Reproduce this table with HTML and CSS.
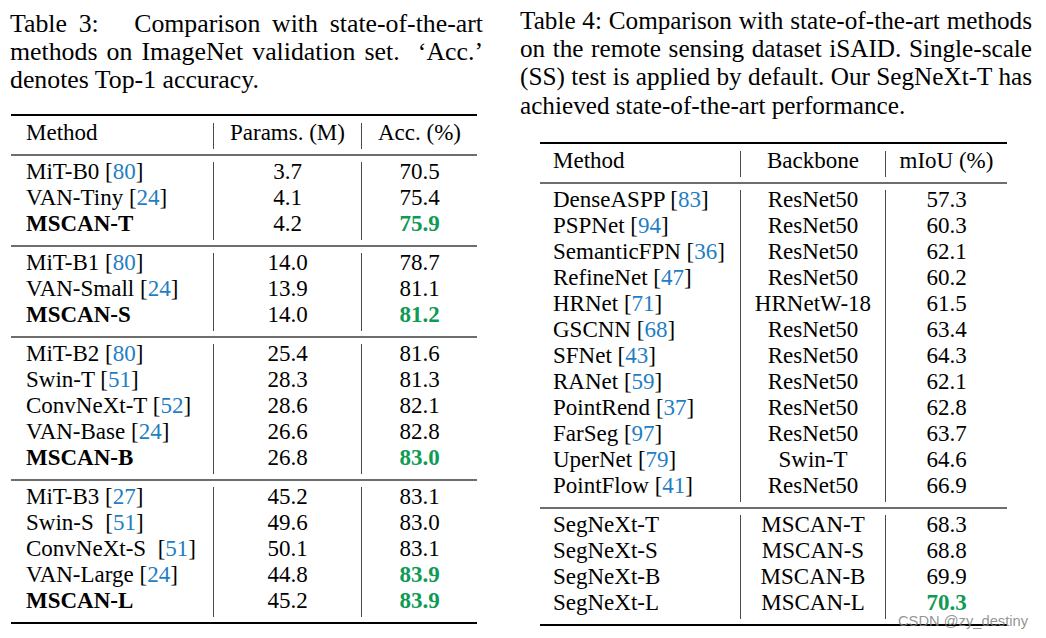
FILE: index.html
```html
<!DOCTYPE html>
<html>
<head>
<meta charset="utf-8">
<link rel="stylesheet" href="styles.css">
</head>
<body>
<div class="page">
  <section class="col col-left">
    <div class="caption cap3">
      <span class="jl">Table 3:&nbsp;&nbsp; Comparison with state-of-the-art</span>
      <span class="jl">methods on ImageNet validation set. &nbsp;‘Acc.’</span>
      <span class="ll">denotes Top-1 accuracy.</span>
    </div>
    <div class="tbl t3">
      <div class="grp head">
        <div class="c c1"><div class="ln">Method</div></div>
        <div class="c c2"><div class="ln">Params. (M)</div></div>
        <div class="c c3"><div class="ln">Acc. (%)</div></div>
      </div>
      <div class="grp">
        <div class="c c1"><div class="ln">MiT-B0 <span class="ref">[<span class="n">80</span>]</span></div><div class="ln">VAN-Tiny <span class="ref">[<span class="n">24</span>]</span></div><div class="ln b">MSCAN-T</div></div>
        <div class="c c2"><div class="ln">3.7</div><div class="ln">4.1</div><div class="ln">4.2</div></div>
        <div class="c c3"><div class="ln">70.5</div><div class="ln">75.4</div><div class="ln best">75.9</div></div>
      </div>
      <div class="grp">
        <div class="c c1"><div class="ln">MiT-B1 <span class="ref">[<span class="n">80</span>]</span></div><div class="ln">VAN-Small <span class="ref">[<span class="n">24</span>]</span></div><div class="ln b">MSCAN-S</div></div>
        <div class="c c2"><div class="ln">14.0</div><div class="ln">13.9</div><div class="ln">14.0</div></div>
        <div class="c c3"><div class="ln">78.7</div><div class="ln">81.1</div><div class="ln best">81.2</div></div>
      </div>
      <div class="grp">
        <div class="c c1"><div class="ln">MiT-B2 <span class="ref">[<span class="n">80</span>]</span></div><div class="ln">Swin-T <span class="ref">[<span class="n">51</span>]</span></div><div class="ln">ConvNeXt-T <span class="ref">[<span class="n">52</span>]</span></div><div class="ln">VAN-Base <span class="ref">[<span class="n">24</span>]</span></div><div class="ln b">MSCAN-B</div></div>
        <div class="c c2"><div class="ln">25.4</div><div class="ln">28.3</div><div class="ln">28.6</div><div class="ln">26.6</div><div class="ln">26.8</div></div>
        <div class="c c3"><div class="ln">81.6</div><div class="ln">81.3</div><div class="ln">82.1</div><div class="ln">82.8</div><div class="ln best">83.0</div></div>
      </div>
      <div class="grp">
        <div class="c c1"><div class="ln">MiT-B3 <span class="ref">[<span class="n">27</span>]</span></div><div class="ln">Swin-S&nbsp; <span class="ref">[<span class="n">51</span>]</span></div><div class="ln">ConvNeXt-S&nbsp; <span class="ref">[<span class="n">51</span>]</span></div><div class="ln">VAN-Large <span class="ref">[<span class="n">24</span>]</span></div><div class="ln b">MSCAN-L</div></div>
        <div class="c c2"><div class="ln">45.2</div><div class="ln">49.6</div><div class="ln">50.1</div><div class="ln">44.8</div><div class="ln">45.2</div></div>
        <div class="c c3"><div class="ln">83.1</div><div class="ln">83.0</div><div class="ln">83.1</div><div class="ln best">83.9</div><div class="ln best">83.9</div></div>
      </div>
    </div>
  </section>

  <section class="col col-right">
    <div class="caption cap4">
      <span class="jl">Table 4: Comparison with state-of-the-art methods</span>
      <span class="jl">on the remote sensing dataset iSAID. Single-scale</span>
      <span class="jl">(SS) test is applied by default. Our SegNeXt-T has</span>
      <span class="ll">achieved state-of-the-art performance.</span>
    </div>
    <div class="tbl t4">
      <div class="grp head">
        <div class="c c1"><div class="ln">Method</div></div>
        <div class="c c2"><div class="ln">Backbone</div></div>
        <div class="c c3"><div class="ln">mIoU (%)</div></div>
      </div>
      <div class="grp">
        <div class="c c1">
          <div class="ln">DenseASPP <span class="ref">[<span class="n">83</span>]</span></div>
          <div class="ln">PSPNet <span class="ref">[<span class="n">94</span>]</span></div>
          <div class="ln">SemanticFPN <span class="ref">[<span class="n">36</span>]</span></div>
          <div class="ln">RefineNet <span class="ref">[<span class="n">47</span>]</span></div>
          <div class="ln">HRNet <span class="ref">[<span class="n">71</span>]</span></div>
          <div class="ln">GSCNN <span class="ref">[<span class="n">68</span>]</span></div>
          <div class="ln">SFNet <span class="ref">[<span class="n">43</span>]</span></div>
          <div class="ln">RANet <span class="ref">[<span class="n">59</span>]</span></div>
          <div class="ln">PointRend <span class="ref">[<span class="n">37</span>]</span></div>
          <div class="ln">FarSeg <span class="ref">[<span class="n">97</span>]</span></div>
          <div class="ln">UperNet <span class="ref">[<span class="n">79</span>]</span></div>
          <div class="ln">PointFlow <span class="ref">[<span class="n">41</span>]</span></div>
        </div>
        <div class="c c2">
          <div class="ln">ResNet50</div><div class="ln">ResNet50</div><div class="ln">ResNet50</div><div class="ln">ResNet50</div>
          <div class="ln">HRNetW-18</div><div class="ln">ResNet50</div><div class="ln">ResNet50</div><div class="ln">ResNet50</div>
          <div class="ln">ResNet50</div><div class="ln">ResNet50</div><div class="ln">Swin-T</div><div class="ln">ResNet50</div>
        </div>
        <div class="c c3">
          <div class="ln">57.3</div><div class="ln">60.3</div><div class="ln">62.1</div><div class="ln">60.2</div>
          <div class="ln">61.5</div><div class="ln">63.4</div><div class="ln">64.3</div><div class="ln">62.1</div>
          <div class="ln">62.8</div><div class="ln">63.7</div><div class="ln">64.6</div><div class="ln">66.9</div>
        </div>
      </div>
      <div class="grp">
        <div class="c c1"><div class="ln">SegNeXt-T</div><div class="ln">SegNeXt-S</div><div class="ln">SegNeXt-B</div><div class="ln">SegNeXt-L</div></div>
        <div class="c c2"><div class="ln">MSCAN-T</div><div class="ln">MSCAN-S</div><div class="ln">MSCAN-B</div><div class="ln">MSCAN-L</div></div>
        <div class="c c3"><div class="ln">68.3</div><div class="ln">68.8</div><div class="ln">69.9</div><div class="ln best">70.3</div></div>
      </div>
    </div>
    <div class="watermark">CSDN @zy_destiny</div>
  </section>
</div>
</body>
</html>
```

FILE: styles.css
```css
html, body {
  margin: 0;
  padding: 0;
  background: #ffffff;
}

body {
  font-family: "Liberation Serif", "Times New Roman", serif;
  color: #000000;
  width: 1046px;
  height: 638px;
  overflow: hidden;
}

.page {
  display: flex;
  align-items: flex-start;
  padding-left: 10px;
  gap: 37px;
}

.col {
  display: flex;
  flex-direction: column;
}

.col-left {
  width: 473px;
}

.col-right {
  width: 512px;
  position: relative;
  height: 638px;
}

/* captions */
.caption {
  line-height: 28.2px;
  display: flex;
  flex-direction: column;
}

.caption .jl {
  display: block;
  text-align: justify;
  text-align-last: justify;
  white-space: nowrap;
}

.caption .ll {
  display: block;
  text-align: left;
  white-space: nowrap;
}

.cap3 {
  font-size: 25.8px;
  padding-top: 10px;
}

.cap4 {
  font-size: 25.2px;
  padding-top: 7px;
}

/* tables */
.tbl {
  border-top: 2px solid #000;
  border-bottom: 2px solid #000;
  font-size: 23px;
}

.t3 {
  margin-top: 19px;
  margin-left: 1px;
  width: 466px;
}

.t4 {
  margin-top: 22px;
  margin-left: 20px;
  width: 467px;
}

.grp {
  display: grid;
  padding: 6px 0 5px;
  border-top: 2px solid #6e6e6e;
}

.grp.head {
  border-top: none;
  padding: 7px 0 5px;
}

.t3 .grp {
  grid-template-columns: 202px 148px 116px;
}

.t4 .grp {
  grid-template-columns: 200px 145px 122px;
}

.c {
  display: flex;
  flex-direction: column;
}

.c2, .c3 {
  border-left: 1px solid #4a4a4a;
  text-align: center;
}

.c > .ln:first-child {
  margin-top: -3px;
}

.c > .ln:last-child {
  margin-bottom: 3px;
}

.ln {
  height: 26px;
  line-height: 26px;
  white-space: nowrap;
}

.t3 .c1 {
  padding-left: 15px;
}

.t4 .c1 {
  padding-left: 13px;
}

.ref .n {
  color: #1f7ec4;
}

.b {
  font-weight: bold;
}

.best {
  font-weight: bold;
  color: #0f9a56;
}

/* watermark overlay */
.watermark {
  position: absolute;
  left: 378px;
  top: 612px;
  font-family: "Liberation Sans", Arial, sans-serif;
  font-size: 14.7px;
  line-height: 18px;
  color: rgba(128, 128, 128, 0.85);
  white-space: nowrap;
}
```
